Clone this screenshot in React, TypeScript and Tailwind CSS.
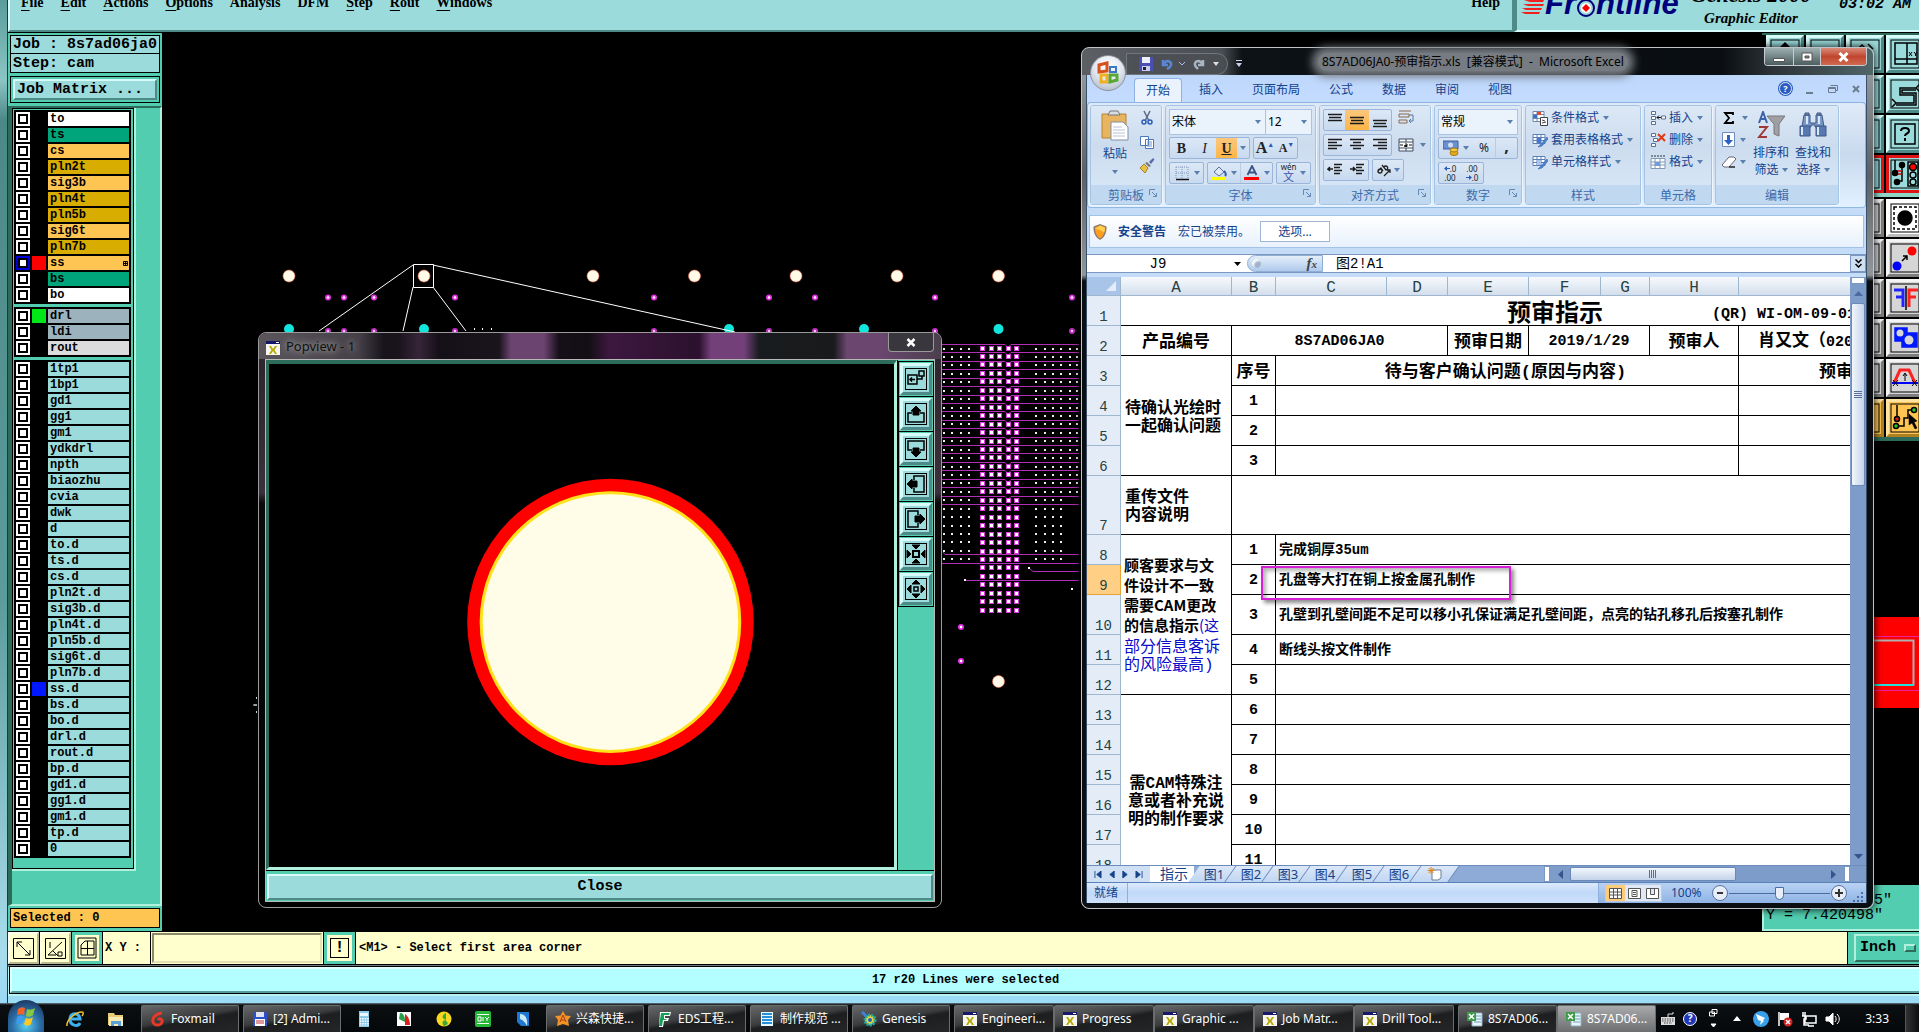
import React from "react";

const SERIF = "font-['Liberation_Serif',serif]";
const MONO = "font-['Liberation_Mono','Noto_Sans_CJK_SC',monospace]";
const UI = "font-['Noto_Sans','Noto_Sans_CJK_SC',sans-serif]";
const CJK = "font-['Noto_Sans_CJK_SC',sans-serif]";

const RAISED_CYAN =
  "border-2 border-t-[#d6fbf8] border-l-[#d6fbf8] border-b-[#4d8a88] border-r-[#4d8a88] bg-[#9bdbdb]";

/* ---------- Genesis: menu bar ---------- */

const menus: [string, string][] = [
  ["F", "ile"],
  ["E", "dit"],
  ["A", "ctions"],
  ["O", "ptions"],
  ["", "Analysis"],
  ["", "DFM"],
  ["S", "tep"],
  ["R", "out"],
  ["W", "indows"],
];

function MenuBar() {
  return (
    <header className="flex h-[33px] shrink-0 overflow-hidden border-b border-black bg-[#9bdbdb]">
      <nav
        className={`flex min-w-0 flex-1 items-start border-b-2 border-l-2 border-r-2 border-b-[#4d8a88] border-l-[#d6fbf8] border-r-[#4d8a88] pl-[11px] pr-3 text-[14px] font-bold leading-5 ${SERIF}`}
      >
        <div className="-mt-[7px] flex gap-[17px]">
          {menus.map(([key, rest]) => (
            <button key={key + rest} className="whitespace-nowrap">
              {key && <span className="underline underline-offset-[3px]">{key}</span>}
              {rest}
            </button>
          ))}
        </div>
        <button className="-mt-[7px] ml-auto">Help</button>
      </nav>
      <div className="flex w-[405px] shrink-0 items-start overflow-hidden border-b-2 border-l-[3px] border-b-[#d6fbf8] border-l-[#4d8a88]">
        <div className="-mt-[14px] flex w-[168px] items-start pl-1">
          <svg className="mt-[14px] h-4 w-6" viewBox="0 0 24 16" fill="#f21d1d">
            <path d="M3 0h20l-1 2H9zM2 4h21l-1 2H7zM1 8h20l-1 2H5zM0 12h19l-1 2H4z" />
          </svg>
          <div className="flex items-start font-['Liberation_Sans',sans-serif] text-[31px] font-bold italic leading-[36px] text-[#00007c]">
            Fr
            <svg className="mt-3 h-5 w-5" viewBox="0 0 20 20" role="img" aria-label="o">
              <circle cx="10" cy="10" r="8" fill="none" stroke="#00007c" strokeWidth="2" />
              <circle cx="10" cy="10" r="5" fill="#fff" />
              <path d="M10 6l4 4-4 4-4-4z" fill="#f00" />
            </svg>
            ntline
          </div>
        </div>
        <div className={`-mt-4 w-[132px] text-center font-bold italic ${SERIF}`}>
          <div className="whitespace-nowrap text-[22px] leading-[22px]">Genesis 2000</div>
          <div className="pt-1 text-[15px] leading-4">Graphic Editor</div>
        </div>
        <div className={`-mt-1 ml-auto pr-2 text-[15px] font-bold italic leading-[18px] ${MONO}`}>03:02 AM</div>
      </div>
    </header>
  );
}

/* ---------- Genesis: layer list ---------- */

type Layer = { name: string; tone: string; swatch?: string; active?: boolean };

const WHITE = "bg-white";
const GREEN = "bg-[#00a57b]";
const AMBER = "bg-[#ffc552]";
const OCHRE = "bg-[#d9ac00]";
const SLATE = "bg-[#9cb3bd]";
const SILVER = "bg-[#dcdcdc]";
const AQUA = "bg-[#9bdbdb]";

const boardLayers: Layer[] = [
  { name: "to", tone: WHITE },
  { name: "ts", tone: GREEN },
  { name: "cs", tone: AMBER },
  { name: "pln2t", tone: OCHRE },
  { name: "sig3b", tone: AMBER },
  { name: "pln4t", tone: OCHRE },
  { name: "pln5b", tone: OCHRE },
  { name: "sig6t", tone: AMBER },
  { name: "pln7b", tone: OCHRE },
  { name: "ss", tone: AMBER, swatch: "bg-[#ff0000]", active: true },
  { name: "bs", tone: GREEN },
  { name: "bo", tone: WHITE },
];
const drillLayers: Layer[] = [
  { name: "drl", tone: SLATE, swatch: "bg-[#00e818]" },
  { name: "ldi", tone: SLATE },
  { name: "rout", tone: SILVER },
];
const miscLayers: Layer[] =
  "1tp1 1bp1 gd1 gg1 gm1 ydkdrl npth biaozhu cvia dwk d to.d ts.d cs.d pln2t.d sig3b.d pln4t.d pln5b.d sig6t.d pln7b.d ss.d bs.d bo.d drl.d rout.d bp.d gd1.d gg1.d gm1.d tp.d 0"
    .split(" ")
    .map((name) => ({ name, tone: AQUA, swatch: name === "ss.d" ? "bg-[#0018ff]" : undefined }));

function LayerGroup({ layers }: { layers: Layer[] }) {
  return (
    <div className="flex flex-col gap-[2px] bg-black p-[2px]">
      {layers.map((l) => (
        <label key={l.name} className="flex h-[14px] gap-[2px]">
          <input
            type="checkbox"
            className={`h-[14px] w-[14px] shrink-0 appearance-none border-2 bg-white shadow-[inset_0_0_0_2px_#000] ${
              l.active ? "border-[#0000d8]" : "border-white"
            }`}
          />
          <span className={`w-[14px] shrink-0 ${l.swatch ?? "bg-black"}`} />
          <span className={`flex flex-1 items-center justify-between pl-[2px] text-[12px] font-bold leading-[14px] ${l.tone} ${MONO}`}>
            {l.name}
            {l.active && (
              <svg className="mr-px h-[5px] w-[5px]" viewBox="0 0 5 5" fill="none" stroke="#000">
                <path d="M.5.5h4v4h-4zM2.5 0v5M0 2.5h5" />
              </svg>
            )}
          </span>
        </label>
      ))}
    </div>
  );
}

function LayerPanel() {
  return (
    <aside className={`flex w-[154px] shrink-0 flex-col bg-[#52cdb0] ${MONO} font-bold`}>
      <div className="mx-[2px] mt-[2px] flex flex-col text-[15px]">
        <div className="h-[19px] whitespace-nowrap border border-black bg-[#9bdbdb] pl-[2px] leading-[17px]">Job : 8s7ad06ja0</div>
        <div className="h-[19px] border border-t-0 border-black bg-[#9bdbdb] pl-[2px] leading-[20px]">Step: cam</div>
        <div className="mt-[3px] h-[27px] border border-black bg-[#52cdb0] p-[2px]">
          <button className={`h-full w-full pl-[2px] text-left leading-[17px] ${RAISED_CYAN}`}>Job Matrix ...</button>
        </div>
      </div>
      <div className="mt-[3px] flex flex-1 items-start border-b-2 border-l-4 border-r-2 border-t-2 border-b-[#b0f0dc] border-l-[#2d6b5b] border-r-[#b0f0dc] border-t-[#2d6b5b]">
        <div className="w-[124px] border-b-2 border-r-2 border-[#b0f0dc]">
          <div className="flex flex-col gap-[3px] border border-black bg-[#52cdb0] pb-[10px] pl-px pr-[2px] pt-px">
            <LayerGroup layers={boardLayers} />
            <LayerGroup layers={drillLayers} />
            <LayerGroup layers={miscLayers} />
          </div>
        </div>
      </div>
      <div className="mx-[2px] mb-[3px] mt-[2px] h-5 border border-black bg-[#ffc552] pl-[2px] text-[12px] leading-[18px]">
        Selected : 0
      </div>
    </aside>
  );
}

/* ---------- Genesis: board canvas ---------- */

const range = (n: number) => Array.from({ length: n }, (_, i) => i);

function BoardCanvas() {
  const pads = [289, 424, 593, 694.5, 796, 897, 998.5];
  const vias = [328, 344, 374, 455, 654, 769, 815, 935, 1072];
  const cyan = [289, 424, 729, 864, 998.5];
  return (
    <div className="relative min-w-0 flex-1 overflow-hidden bg-black">
      <svg className="absolute left-0 top-0 h-[897px] w-[1600px]" viewBox="162 33 1600 897">
        {pads.map((x) => (
          <circle key={x} cx={x} cy="276" r="6" fill="#fffbe8" stroke="#ff6a50" strokeWidth=".6" />
        ))}
        <circle cx="998.5" cy="681.5" r="6" fill="#fffbe8" stroke="#ff6a50" strokeWidth=".6" />
        {vias.map((x) => (
          <g key={x}>
            <circle cx={x} cy="297.5" r="3" fill="#e22fe2" />
            <circle cx={x} cy="297.5" r="1.3" fill="#fff" />
            <circle cx={x} cy="331" r="3" fill="#c02cc0" />
            <circle cx={x} cy="331" r="1.2" fill="#f8c8f8" />
          </g>
        ))}
        {[627, 661].map((y) => (
          <g key={y}>
            <circle cx="961" cy={y} r="3" fill="#e22fe2" />
            <circle cx="961" cy={y} r="1.3" fill="#fff" />
          </g>
        ))}
        {cyan.map((x) => (
          <circle key={x} cx={x} cy="329" r="5" fill="#12e6dc" />
        ))}
        <path
          d="M413.5 264.5h20v23h-20zM413 265L319 331M413 287L403 331M433 287l33 44M433 265l302 67"
          fill="none"
          stroke="#fff"
        />
        <path d="M474 328h1v2h-1zM482 328h1v2h-1zM491 328h1v2h-1z" fill="#fff" />
        <path d="M253 705h4M256.500 697v2M256.500 711v2M254 705h3" stroke="#c8d0d8" />
        {range(20).map((i) => {
          const y = Math.round(344 + i * 8.42) + 0.5;
          return <path key={i} d={`M942 ${y}h63l3 3l3 -3h68`} fill="none" stroke="#b02fb4" />;
        })}
        {range(32).map((r) =>
          range(5).map((c) => {
            const x = Math.round(982 + c * 8.5);
            const y = Math.round(347.5 + r * 8.46);
            return (
              <g key={`${r}-${c}`}>
                <rect x={x - 2} y={y - 2} width="5" height="5" fill="#d838d8" />
                <rect x={x - 1} y={y - 1} width="3" height="3" fill="#fff" />
              </g>
            );
          })
        )}
        {range(26).map((r) =>
          [944, 952, 961, 969, 1036, 1045, 1053, 1061, 1070, 1077].map((x, c) =>
            c > 7 && r > 17 ? null : (
              <rect key={`${r}-${x}`} x={x - 1} y={Math.round(347.5 + r * 8.43)} width="2" height="2" fill="#e8f0e8" />
            )
          )
        )}
        <path
          d="M943 552l2 2.500h134M942 563.5h137M1029 568l4 3.500h46M965 580.500h114"
          fill="none"
          stroke="#b02fb4"
        />
        <path d="M964 579h2v2h-2zM1028 567h2v2h-2zM1071 588h2v2h-2z" fill="#fff" />
      </svg>
    </div>
  );
}

/* ---------- Genesis: tool palette at the right ---------- */

function Tool({ tone, children }: { tone: string; children?: React.ReactNode }) {
  return (
    <button className={`h-[38px] w-[38px] shrink-0 border-[3px] p-px ${tone}`}>
      <svg className="h-full w-full" viewBox="0 0 30 30" fill="none" stroke="#000" strokeWidth="1.5">
        <rect x="1" y="1" width="28" height="28" strokeWidth="1" />
        {children}
      </svg>
    </button>
  );
}

const T_CYAN = "bg-[#9bdbdb] border-t-[#d6fbf8] border-l-[#d6fbf8] border-b-[#4d8a88] border-r-[#4d8a88]";
const T_GRAY = "bg-[#d6d6d6] border-t-[#f4f4f4] border-l-[#f4f4f4] border-b-[#7d7d7d] border-r-[#7d7d7d]";
const T_RED = "bg-[#9bdbdb] border-[#e01414]";
const T_WHITE = "bg-white border-white border-b-[#bbb]";
const T_AMBER = "bg-[#ffc552] border-t-[#ffe3a0] border-l-[#ffe3a0] border-b-[#b08020] border-r-[#b08020]";

function ToolPalette() {
  const filler = (tone: string, n: number) => range(n).map((i) => <Tool key={i} tone={tone} />);
  const grid = "grid w-[164px] grid-cols-[repeat(4,38px)] gap-[2px] bg-black pl-[4px]";
  return (
    <aside className="flex w-[157px] shrink-0 flex-col overflow-hidden bg-black">
      <div className={`${grid} border-t-2 border-t-[#2d6b5b]`}>
        <Tool tone={T_CYAN}>
          <path d="M15 4l6 6H9zM15 10v14" fill="#000" />
        </Tool>
        <Tool tone={T_CYAN}>
          <path d="M6 10h18v12H6z" />
        </Tool>
        <Tool tone={T_CYAN}>
          <path d="M8 10l4-4 4 4M18 5l5 5" />
        </Tool>
        <Tool tone={T_CYAN}>
          <path d="M5 4h22v21H5zM17 4v21M5 20h22" />
          <path d="M19 13l3 4m0-4l-3 4M24 13l1.500 2 1.500-2m-1.500 2v2" strokeWidth="1" />
        </Tool>
        {filler(T_CYAN, 3)}
        <Tool tone={T_CYAN}>
          <path d="M26 9H10v7h14v8H6M30 5l-4 4 4 4M2 20l4 4-4 4" />
          <path d="M26 11H12v3h14v12H6" />
        </Tool>
        {filler(T_CYAN, 3)}
        <Tool tone={T_CYAN}>
          <path d="M5 5h20v20H5z" />
          <path d="M11 12c0-4 8-4 8 0 0 3-4 2-4 5M15 19v3" strokeWidth="2" />
        </Tool>
        {filler(T_RED, 3)}
        <Tool tone={T_RED}>
          <path d="M5 1v12M12 6v16H7M18 3h10v24H18z" />
          <path d="M6 12h6M6 15h5" stroke="#d00" />
          <circle cx="12" cy="6" r="2.500" fill="#000" />
          <circle cx="5" cy="14" r="2.500" fill="#000" />
          <circle cx="7" cy="23" r="2.500" fill="#000" />
          <circle cx="23" cy="8" r="3.500" fill="#f00" />
          <circle cx="23" cy="16" r="3" />
          <circle cx="23" cy="23" r="3" />
        </Tool>
      </div>
      <div className="h-1 shrink-0 bg-[#8fd8c8]" />
      <div className={`${grid} pt-[2px]`}>
        {filler(T_GRAY, 3)}
        <Tool tone={T_WHITE}>
          <rect x="4" y="4" width="22" height="22" strokeDasharray="3 2" />
          <circle cx="15" cy="15" r="7" fill="#000" />
        </Tool>
        {filler(T_GRAY, 3)}
        <Tool tone={T_GRAY}>
          <circle cx="7" cy="23" r="4.500" fill="#00f" stroke="none" />
          <circle cx="22" cy="8" r="4.500" fill="#f00" stroke="none" />
          <path d="M12 18l5-5m-4 0h4v4" />
        </Tool>
        {filler(T_GRAY, 3)}
        <Tool tone={T_GRAY}>
          <path d="M4 7h9v17M6 14h7" stroke="#22f" strokeWidth="3" />
          <path d="M28 7H19v17M26 14h-7" stroke="#f22" strokeWidth="3" />
          <path d="M16 3v24" />
        </Tool>
        {filler(T_GRAY, 3)}
        <Tool tone={T_GRAY}>
          <path d="M5 5h12v5h10v14H12v-6H5z" fill="#0018ff" stroke="#0018ff" />
          <circle cx="10" cy="10" r="3.500" fill="#d6d6d6" stroke="none" />
          <circle cx="19" cy="17" r="4.500" fill="#d6d6d6" stroke="none" />
        </Tool>
        {filler(T_GRAY, 3)}
        <Tool tone={T_GRAY}>
          <path d="M4 20L10 7h9l6 13" stroke="#f22" strokeWidth="3" />
          <path d="M2 20h26" stroke="#00f" strokeWidth="2" />
          <path d="M15 18v-7m-2 2l2-3 2 3M3 17l5 6m0-6l-5 6M22 17l5 6m0-6l-5 6" strokeWidth="1" />
        </Tool>
        {filler(T_AMBER, 3)}
        <Tool tone={T_AMBER}>
          <path d="M7 2v13M6 23h8v-8h4V7h5" />
          <circle cx="7" cy="16" r="2.500" fill="#c22" />
          <circle cx="6" cy="23" r="2.500" fill="#2c2" />
          <circle cx="24" cy="7" r="2.500" fill="#2c2" />
          <path d="M19 11l8 7-3 1 3 6-2 1-3-6-3 2z" fill="#000" strokeWidth=".5" />
        </Tool>
      </div>
      <div className="h-1 shrink-0 bg-[#2d6b5b]" />
      <div className="flex flex-1 items-start justify-end pt-[176px]">
        <svg className="h-[91px] w-[45px]" viewBox="0 0 45 91" fill="none">
          <path d="M0 0h45v91H0z" fill="#f00" />
          <path d="M0 19.500h45M0 73.500h45" stroke="#f02098" />
          <path d="M0 23.500h39.500v45" stroke="#b0b0b0" strokeWidth="2" />
          <path d="M0 68h40" stroke="#20e0d8" strokeWidth="2" />
        </svg>
      </div>
      <div
        className={`h-[46px] shrink-0 whitespace-pre border-b-2 border-l-2 border-[#b0f0dc] bg-[#52cdb0] pl-[2px] pt-2 text-[15px] leading-[15px] ${MONO}`}
      >
        <div>{'X = 9.1257385"'}</div>
        <div>{'Y = 7.420498"'}</div>
      </div>
    </aside>
  );
}

/* ---------- Genesis: command line and status ---------- */

function CommandBar() {
  const yellowBtn =
    "flex items-center justify-center border-2 border-t-[#fffff0] border-l-[#fffff0] border-b-[#b8b890] border-r-[#b8b890] bg-[#ffffce]";
  return (
    <div className="flex h-[34px] shrink-0 gap-px border-y border-black bg-black">
      <button className={`w-[31px] ${yellowBtn}`} aria-label="Distance">
        <svg className="h-[21px] w-[21px]" viewBox="0 0 21 21" fill="none" stroke="#000">
          <path d="M.5.5h20v20H.5zM4 4l13 13M4 9V4h5M17 12v5h-5" />
        </svg>
      </button>
      <button className={`w-[31px] ${yellowBtn}`} aria-label="Angle">
        <svg className="h-[21px] w-[21px]" viewBox="0 0 21 21" fill="none" stroke="#000">
          <path d="M.5.5h20v20H.5zM3 17L17 4M3 17h8M5 4v6M8 13l5 5M13 14h4v4h-4z" />
        </svg>
      </button>
      <button className="w-[30px] border-[3px] border-[#52cdb0] bg-[#ffffce] p-[2px]" aria-label="Snap grid">
        <svg className="h-full w-full" viewBox="0 0 20 22" fill="none" stroke="#000">
          <path d="M1 1h18v20H1zM4 8l4-4h9v14H4zM10.500 4v14M4 11.500h13" />
        </svg>
      </button>
      <label htmlFor="xy" className={`flex w-[47px] items-center bg-[#ffffce] pl-[2px] text-[12px] font-bold ${MONO}`}>
        X Y :
      </label>
      <div className="w-[172px] bg-[#ffffce] p-px">
        <input
          id="xy"
          defaultValue=""
          className="h-full w-full border-2 border-b-[#e2e2b4] border-l-[#8a8a6a] border-r-[#e2e2b4] border-t-[#8a8a6a] bg-[#ffffce] px-1"
        />
      </div>
      <button
        className={`w-[31px] border-[3px] border-[#52cdb0] bg-[#ffffce] p-[3px] text-[16px] font-bold leading-none ${MONO}`}
      >
        <span className="flex h-full items-center justify-center border border-black">!</span>
      </button>
      <output className={`flex flex-1 items-center bg-[#ffffce] pl-[3px] text-[12px] font-bold ${MONO}`}>
        &lt;M1&gt; - Select first area corner
      </output>
      <div className="w-[71px] bg-[#52cdb0] py-[2px] pl-[6px]">
        <button
          className={`flex h-full w-full items-center gap-2 border-2 border-r-0 border-b-[#2d6b5b] border-l-[#b0f0dc] border-t-[#b0f0dc] pl-1 text-[15px] font-bold ${MONO}`}
        >
          Inch
          <span className="h-2 w-3 border-2 border-b-[#2d6b5b] border-l-[#b0f0dc] border-r-[#2d6b5b] border-t-[#b0f0dc]" />
        </button>
      </div>
    </div>
  );
}

/* ---------- Popview window ---------- */

function XIcon() {
  return (
    <svg className="h-[14px] w-[14px] shrink-0" viewBox="0 0 14 14">
      <path d="M0 0h14v14H0z" fill="#f6f6ee" />
      <path d="M0 0h14v3H0z" fill="#18186a" />
      <path d="M10 1h3v1h-3z" fill="#fff" />
      <path d="M3 5h2l2 3 2-3h2L8.500 9l2.500 4H9L7 10l-2 3H3l2.500-4z" fill="#b5a800" />
    </svg>
  );
}

function PopTool({ label, children }: { label: string; children: React.ReactNode }) {
  return (
    <button aria-label={label} className="h-[34px] w-[34px] border border-[#52cdb0] bg-[#52cdb0]">
      <span className="flex h-full w-full items-center justify-center border-[3px] border-b-[#4d8a88] border-l-[#d6fbf8] border-r-[#4d8a88] border-t-[#d6fbf8] bg-[#9bdbdb]">
        <svg className="h-[22px] w-[22px]" viewBox="0 0 22 22" fill="none" stroke="#000">
          <rect x=".5" y=".5" width="21" height="21" />
          {children}
        </svg>
      </span>
    </button>
  );
}

function Popview() {
  return (
    <section
      className={`absolute left-[258px] top-[332px] flex h-[576px] w-[684px] flex-col rounded-lg border border-[#9a9a9a] bg-[linear-gradient(180deg,#2b232d_0,#3b303d_160px,#0a0a0a_170px,#000_100%)] pb-[5px] pl-[6px] pr-[6px] ${UI}`}
    >
      <div className="-mx-[6px] flex h-[26px] shrink-0 items-start rounded-t-lg bg-[linear-gradient(90deg,#5a565c_0,#454047_100px,#17131a_125px,#1a141d_140px,#37243a_160px,#151018_180px,#1a141d_240px,#6b4470_252px,#6b4470_285px,#160f18_300px,#120f14_330px,#3d173f_350px,#2b112d_440px,#74407a_452px,#74407a_485px,#181c1e_500px,#1a1a1c_575px,#6b4770_588px,#6b4770_620px,#4b404e_680px)] pl-[7px] pr-[7px]">
        <span className="mt-[8px]">
          <XIcon />
        </span>
        <h2 className="ml-[6px] mt-[4px] text-[13px] leading-[18px] text-[#111] [text-shadow:0_0_6px_#aaa,0_0_10px_#999]">
          Popview - 1
        </h2>
        <button
          aria-label="Close Popview"
          className="ml-auto flex h-[19px] w-[46px] items-center justify-center rounded-b border border-t-0 border-[#9a9a9a] bg-[#3a363d] text-white"
        >
          <svg className="h-[9px] w-[10px]" viewBox="0 0 10 9" stroke="#fff" strokeWidth="2.500">
            <path d="M1.500 1l7 7M8.500 1l-7 7" />
          </svg>
        </button>
      </div>
      <div className="flex min-h-0 flex-1 flex-col border border-[#b8b8b8] bg-[#52cdb0]">
        <div className="flex min-h-0 flex-1">
          <div className="min-w-0 flex-1 overflow-hidden border-b-[3px] border-l-[3px] border-r-[3px] border-t-4 border-b-[#b0f0dc] border-l-[#2d6b5b] border-r-[#b0f0dc] border-t-[#2d6b5b] bg-black">
            <svg className="h-full w-full" viewBox="0 0 626 504" preserveAspectRatio="xMinYMin slice">
              <circle cx="342" cy="258.500" r="143.500" fill="#f00" />
              <circle cx="342" cy="258.500" r="131" fill="#ffe21a" />
              <circle cx="342" cy="258.500" r="128" fill="#fffce8" />
            </svg>
          </div>
          <div className="flex w-[37px] flex-col items-center gap-px border-l border-black pt-[2px] [&>button]:shadow-[0_0_0_1px_#000]">
            <PopTool label="Zoom to source">
              <path d="M3 7h9v9H3zM14 3h5v5h-5zM12 11h5V8M10 11.500H5m2-2l-2 2 2 2" strokeWidth="1.500" />
            </PopTool>
            <PopTool label="Pan up">
              <path d="M7 10H3v9h16v-9h-4" strokeWidth="1.500" />
              <path d="M11 3l5 5h-2v4H8V8H6z" fill="#000" />
            </PopTool>
            <PopTool label="Pan down">
              <path d="M7 12H3V3h16v9h-4" strokeWidth="1.500" />
              <path d="M11 19l5-5h-2v-4H8v4H6z" fill="#000" />
            </PopTool>
            <PopTool label="Pan left">
              <path d="M9 7V3h10v16H9v-4" strokeWidth="1.500" />
              <path d="M2 11l5-5v2h5v6H7v2z" fill="#000" />
            </PopTool>
            <PopTool label="Pan right">
              <path d="M13 7V3H3v16h10v-4" strokeWidth="1.500" />
              <path d="M20 11l-5-5v2h-5v6h5v2z" fill="#000" />
            </PopTool>
            <PopTool label="Zoom out">
              <path d="M8 8h6v6H8z" strokeWidth="2" />
              <path d="M7 2h8l-4 4zM7 20h8l-4-4zM2 7v8l4-4zM20 7v8l-4-4z" fill="#000" />
            </PopTool>
            <PopTool label="Zoom in">
              <path d="M9 9h4v4H9z" strokeWidth="1.500" />
              <path d="M7 6h8l-4-4zM7 16h8l-4 4zM6 7v8l-4-4zM16 7v8l4-4z" fill="#000" />
            </PopTool>
          </div>
        </div>
        <div className="border-t border-black px-px pb-px pt-px">
          <button className={`h-[26px] w-full text-[15px] font-bold leading-[22px] ${RAISED_CYAN} ${MONO}`}>Close</button>
        </div>
      </div>
    </section>
  );
}

/* ---------- Excel window ---------- */

const Caret = ({ className = "" }: { className?: string }) => (
  <svg className={`h-1 w-[6px] shrink-0 ${className}`} viewBox="0 0 6 4">
    <path d="M0 0h6L3 4z" fill="#5b7fae" />
  </svg>
);

function Dropdown({ label, value, className }: { label: string; value: string; className: string }) {
  return (
    <div className={`relative flex h-[26px] items-center border border-[#a9c3e4] bg-[#eaf2fb] ${className}`}>
      <select aria-label={label} className="h-full w-full appearance-none bg-transparent pl-[2px] text-black">
        <option>{value}</option>
      </select>
      <Caret className="pointer-events-none absolute right-1" />
    </div>
  );
}

function ExcelTitle() {
  return (
    <div className="relative flex h-[27px] shrink-0 items-start">
      <div className="ml-[44px] mt-[5px] flex h-[22px] w-[102px] items-center rounded-r-xl border border-[#70767c] bg-[#4a4f54]/70 pl-[12px]">
        <svg className="h-[14px] w-[14px]" viewBox="0 0 14 14">
          <path d="M0 0h14v14H0z" fill="#4a4fb0" />
          <path d="M3 0h8v6H3z" fill="#eef" />
          <path d="M3 9h8v5H3z" fill="#c8ccf0" />
          <path d="M4 10h3v3H4z" fill="#223" />
        </svg>
        <svg className="ml-2 h-3 w-3" viewBox="0 0 12 12" fill="none" stroke="#5a86d8" strokeWidth="2.500">
          <path d="M2 2v5h5M2.500 6.500C5 1 11 3 10 7c-.5 2-2 3-4 4" />
        </svg>
        <svg className="ml-[6px] h-1 w-[6px]" viewBox="0 0 6 4" fill="none" stroke="#a8c0ea">
          <path d="M0 0l3 3 3-3" />
        </svg>
        <svg className="ml-2 h-3 w-3" viewBox="0 0 12 12" fill="none" stroke="#a8b4c0" strokeWidth="2.500">
          <path d="M10 2v5H5M9.500 6.500C7 1 1 3 2 7c.5 2 2 3 3 4" />
        </svg>
        <svg className="ml-2 h-1 w-[6px]" viewBox="0 0 6 4" fill="#ddd">
          <path d="M0 0h6L3 4z" />
        </svg>
      </div>
      <svg className="ml-2 mt-3 h-[7px] w-[6px]" viewBox="0 0 6 7" fill="#c8d4ea">
        <path d="M0 0h6v1H0zM0 3h6L3 7z" />
      </svg>
      <h1 className="ml-[76px] mt-[5px] whitespace-pre rounded-full bg-[#777c82] px-[4px] text-[12px] leading-[18px] text-black shadow-[0_0_8px_6px_#777c82]">
        {"8S7AD06JA0-预审指示.xls  [兼容模式]  -  Microsoft Excel"}
      </h1>
      <div className="ml-auto mr-[6px] flex h-[18px] overflow-hidden rounded-b border border-t-0 border-[#c8ccd0]">
        <button aria-label="Minimize" className="w-7 bg-gradient-to-b from-[#9fb0b2] to-[#4c5e60] pl-2 pt-[6px]">
          <svg className="h-1 w-3" viewBox="0 0 12 4">
            <path d="M.5.5h11v3H.5z" fill="#fff" stroke="#555" />
          </svg>
        </button>
        <button aria-label="Restore" className="w-[27px] border-l border-[#c8ccd0] bg-gradient-to-b from-[#9fb0b2] to-[#4c5e60] pl-[7px]">
          <svg className="h-[10px] w-3" viewBox="0 0 12 10">
            <path d="M1 1h10v8H1zM4 4h4v2H4z" fill="#fff" stroke="#555" fillRule="evenodd" />
          </svg>
        </button>
        <button
          aria-label="Close"
          className="flex w-[46px] items-center justify-center border-l border-[#c8ccd0] bg-gradient-to-b from-[#d98a7a] via-[#c0452d] to-[#d06a50]"
        >
          <svg className="h-[10px] w-[11px]" viewBox="0 0 11 10" stroke="#fff" strokeWidth="3">
            <path d="M1.500 1l8 8M9.500 1l-8 8" />
          </svg>
        </button>
      </div>
      <button aria-label="Office" className="absolute left-[8px] top-[7px] h-9 w-9 rounded-full border border-[#8a9098] bg-[radial-gradient(circle_at_50%_30%,#fff_0,#e4e8f0_45%,#a4afc0_100%)]">
        <svg className="mx-auto h-6 w-6" viewBox="0 0 24 24" fill="none" strokeWidth="3">
          <path d="M3 4l8-2v8l-8 1z" stroke="#d8501c" />
          <path d="M14 6h6v5h-6z" stroke="#3c78c8" strokeWidth="2" />
          <path d="M5 14h6v7H5z" stroke="#f2b020" />
          <path d="M14 14h7v5l-7 2z" stroke="#58a838" />
        </svg>
      </button>
    </div>
  );
}

function RibbonTabs() {
  return (
    <div className="flex h-[27px] shrink-0 items-end bg-gradient-to-b from-[#bdd7fb] to-[#c4dcff] pl-[47px] pr-[6px] text-[12px] text-[#15428b]">
      <button className="-mb-px h-[25px] rounded-t border border-b-0 border-[#8db2e3] bg-[#eaf3fd] px-[11px]">开始</button>
      <div className="ml-[17px] flex h-6 items-center gap-[29px]">
        {["插入", "页面布局", "公式", "数据", "审阅", "视图"].map((t) => (
          <button key={t}>{t}</button>
        ))}
      </div>
      <div className="ml-auto flex h-[27px] items-center gap-[14px]">
        <span className="flex h-[13px] w-[13px] items-center justify-center rounded-full border border-[#dce8fa] bg-[#2c5cc0] text-[9px] font-bold text-white shadow-[0_0_0_1px_#2c5cc0]">?</span>
        <svg className="h-3 w-2" viewBox="0 0 8 12">
          <path d="M0 9h7v2H0z" fill="#6c7c90" />
        </svg>
        <svg className="h-[10px] w-[10px]" viewBox="0 0 10 10" fill="none" stroke="#6c7c90">
          <path d="M2.500 1.500h7v5h-2M.5 3.500h7v5h-7zM.5 4.500h7" />
        </svg>
        <svg className="h-2 w-2" viewBox="0 0 8 8" stroke="#6c7c90" strokeWidth="2">
          <path d="M1 1l6 6M7 1L1 7" />
        </svg>
      </div>
    </div>
  );
}

function Group({ title, width, launcher, children }: { title: string; width: string; launcher?: boolean; children: React.ReactNode }) {
  return (
    <section className={`flex shrink-0 flex-col overflow-hidden rounded-[3px] border border-[#a5c3e2] shadow-[1px_1px_0_#eef5fd] ${width}`}>
      <div className="flex min-h-0 flex-1 bg-gradient-to-b from-[#dce8f6] via-[#ccdcee] to-[#d6e5f6]">{children}</div>
      <div className="relative h-[19px] bg-[#c0d8f0] text-center text-[12px] leading-[21px] text-[#3e6aaa]">
        {title}
        {launcher && (
          <svg className="absolute right-1 top-1 h-2 w-2" viewBox="0 0 8 8" fill="none" stroke="#6688b4">
            <path d="M.5 6V.5H6M3 3l4 4M7.500 4v3.500H4" />
          </svg>
        )}
      </div>
    </section>
  );
}

const Bar = ({ className = "", children }: { className?: string; children: React.ReactNode }) => (
  <div className={`flex h-[22px] items-stretch overflow-hidden rounded-[2px] border border-[#9ab5d8] bg-gradient-to-b from-[#dce8f6] to-[#c8daf0] [&>button]:flex [&>button]:items-center [&>button]:justify-center ${className}`}>
    {children}
  </div>
);
const ON = "bg-gradient-to-b from-[#fcc77c] to-[#fdb544]";

const Lines = ({ d }: { d: string }) => (
  <svg className="h-4 w-4" viewBox="0 0 16 16" stroke="#1c1c1c" fill="none" strokeWidth="1.500">
    <path d={d} />
  </svg>
);

const SmallIcon = ({ children }: { children: React.ReactNode }) => (
  <svg className="h-4 w-4 shrink-0" viewBox="0 0 16 16" fill="none">
    {children}
  </svg>
);

function Sheetlet({ accent }: { accent: string }) {
  return (
    <SmallIcon>
      <path d="M1 2.500h12v9H1zM1 5.500h12M1 8.500h12M5 2.500v9M9 2.500v9" stroke="#5a7fb8" fill="#fff" />
      <path d="M5 6h4v5H5z" fill={accent} />
      <path d="M15 5l-6 7-3 3 4-1 6-7z" fill="#4a86d0" stroke="#2c5a9c" strokeWidth=".5" />
    </SmallIcon>
  );
}

function Ribbon() {
  return (
    <div className="flex h-[106px] shrink-0 gap-[3px] rounded-[4px] border border-[#8db2e3] border-b-[#90b8e0] bg-gradient-to-b from-[#dfeaf8] via-[#c9daee] to-[#e2f1ff] pb-[2px] pl-[2px] pt-[2px] text-[12px] text-[#15428b]">
      <Group title="剪贴板" width="w-[72px]" launcher>
        <button className="ml-[10px] mt-1 flex w-7 flex-col items-center">
          <svg className="h-[31px] w-7" viewBox="0 0 28 31">
            <path d="M1 4h24v24H1z" fill="#e8b460" stroke="#b88430" />
            <path d="M7 5h12l-2-4h-8z" fill="#d8dce0" stroke="#777" />
            <path d="M10 12h12l5 5v13H10z" fill="#fff" stroke="#8090a8" />
            <path d="M12 17h9M12 20h12M12 23h12M12 26h12" stroke="#b8c4d8" />
          </svg>
          <span className="mt-[5px] whitespace-nowrap leading-4">粘贴</span>
          <Caret className="mt-2" />
        </button>
        <div className="ml-[10px] mt-1 flex flex-col gap-2">
          <SmallIcon>
            <path d="M5 1l5 10M11 1L6 11" stroke="#5a6a80" strokeWidth="1.500" />
            <path d="M3 12a2 2 0 104 0 2 2 0 10-4 0M9 12a2 2 0 104 0 2 2 0 10-4 0" stroke="#2c5cb8" strokeWidth="1.500" />
          </SmallIcon>
          <SmallIcon>
            <path d="M1.500 2.500h8v9h-8zM6.500 5.500h8v9h-8z" fill="#fff" stroke="#4a78b8" />
            <path d="M8 8h5M8 10h5M8 12h5" stroke="#6c94cc" />
          </SmallIcon>
          <SmallIcon>
            <path d="M10 4l4-4 1.500 1.500L12 6z" fill="#5a6ab0" />
            <path d="M8 4l4 4-2 1-4-4z" fill="#777" />
            <path d="M5 6l4 4-3 5-5-5z" fill="#e8c048" stroke="#a88420" />
          </SmallIcon>
        </div>
      </Group>

      <Group title="字体" width="w-[151px]" launcher>
        <div className="ml-[3px] mt-[3px] flex flex-col gap-[2px]">
          <div className="flex">
            <Dropdown label="字体" value="宋体" className="w-[97px]" />
            <Dropdown label="字号" value="12" className="w-[46px] border-l-0" />
          </div>
          <div className={`flex gap-[3px] text-[#222] ${SERIF}`}>
            <Bar>
              <button className="w-[23px] text-[14px] font-bold">B</button>
              <button className="w-[23px] text-[14px] italic">I</button>
              <button className={`w-[21px] text-[14px] font-bold underline ${ON}`}>U</button>
              <button className="w-[12px]" aria-label="下划线样式">
                <Caret />
              </button>
            </Bar>
            <Bar>
              <button className="w-[22px] text-[16px] font-bold">
                A<sup className="text-[7px] text-[#2c5cb8]">▲</sup>
              </button>
              <button className="w-[21px] text-[12px] font-bold">
                A<sup className="text-[7px] text-[#2c5cb8]">▼</sup>
              </button>
            </Bar>
          </div>
          <div className="flex gap-[3px] pt-px">
            <Bar>
              <button className="w-[33px] gap-1" aria-label="边框">
                <SmallIcon>
                  <path d="M2 2h12M2 8h12M2 2v12M8 2v12M14 2v12" stroke="#7c94b4" strokeDasharray="1 1" />
                  <path d="M2 14.500h13" stroke="#111" strokeWidth="1.500" />
                </SmallIcon>
                <Caret />
              </button>
            </Bar>
            <Bar>
              <button className="w-[33px] gap-1 border-r border-[#b8cce4]" aria-label="填充颜色">
                <SmallIcon>
                  <path d="M3 7l5-5 5 5-5 4z" fill="#dfe8f4" stroke="#54719c" />
                  <path d="M13 6c2 2 2 4 1 5" stroke="#2c5cb8" strokeWidth="2" />
                  <path d="M0 12h15v3H0z" fill="#ff0" />
                </SmallIcon>
                <Caret />
              </button>
              <button className="w-[31px] gap-1" aria-label="字体颜色">
                <SmallIcon>
                  <path d="M3.500 10L8 1l4.500 9M5 7.500h6" stroke="#3a5488" strokeWidth="1.800" />
                  <path d="M0 12h15v3H0z" fill="#f00" />
                </SmallIcon>
                <Caret />
              </button>
            </Bar>
            <Bar>
              <button className="w-[33px] gap-1">
                <span className="flex flex-col items-center">
                  <span className="text-[8px] leading-[8px] text-[#222]">wén</span>
                  <span className="text-[11px] leading-[12px] text-[#3a50b0]">文</span>
                </span>
                <Caret />
              </button>
            </Bar>
          </div>
        </div>
      </Group>

      <Group title="对齐方式" width="w-[112px]" launcher>
        <div className="ml-[3px] mt-[3px] flex flex-col gap-[3px]">
          <div className="flex gap-[6px]">
            <Bar>
              <button className="w-[21px]" aria-label="顶端对齐">
                <Lines d="M1 2.500h14M2 5.500h12M1 8.500h14" />
              </button>
              <button className={`w-[24px] ${ON}`} aria-label="垂直居中">
                <Lines d="M1 5.500h14M2 8.500h12M1 11.500h14" />
              </button>
              <button className="w-[22px]" aria-label="底端对齐">
                <Lines d="M1 8.500h14M2 11.500h12M1 14.500h14" />
              </button>
            </Bar>
            <SmallIcon>
              <path d="M1 2h12M1 5h10v3H1zM1 11h8v3H1z" stroke="#8a6a50" />
              <path d="M11 6h4v6h-4m2-2l-2 2 2 2" stroke="#5574a0" />
            </SmallIcon>
          </div>
          <div className="flex items-center gap-[6px]">
            <Bar>
              <button className="w-[21px]" aria-label="左对齐">
                <Lines d="M1 2.500h14M1 5.500h9M1 8.500h14M1 11.500h9" />
              </button>
              <button className="w-[24px]" aria-label="居中">
                <Lines d="M1 2.500h14M4 5.500h8M1 8.500h14M4 11.500h8" />
              </button>
              <button className="w-[22px]" aria-label="右对齐">
                <Lines d="M1 2.500h14M6 5.500h9M1 8.500h14M6 11.500h9" />
              </button>
            </Bar>
            <SmallIcon>
              <path d="M1 2h14v12H1zM1 5h14M1 11h14M8 2v3M8 11v3" stroke="#3c4c64" fill="#fff" />
              <path d="M2 8h3M14 8h-3M7 7h2v2.500H6.500v-1H9" stroke="#111" />
            </SmallIcon>
            <Caret />
          </div>
          <div className="flex gap-[3px]">
            <Bar>
              <button className="w-[22px]" aria-label="减少缩进">
                <Lines d="M7 2.500h8M7 5.500h6M7 8.500h8M7 11.500h6M6 7H1l2-2M1 7l2 2" />
              </button>
              <button className="w-[22px]" aria-label="增加缩进">
                <Lines d="M7 2.500h8M7 5.500h6M7 8.500h8M7 11.500h6M1 7h5L4 5M6 7L4 9" />
              </button>
            </Bar>
            <Bar>
              <button className="w-[30px] gap-[2px]" aria-label="方向">
                <SmallIcon>
                  <path d="M2 9a2 2 0 104 0 2 2 0 10-4 0l3-3 2 3M6 3l4 5a2 2 0 10-2-3M8 14l6-6m-3 0h3v3" stroke="#222" strokeWidth="1.300" />
                </SmallIcon>
                <Caret />
              </button>
            </Bar>
          </div>
        </div>
      </Group>

      <Group title="数字" width="w-[88px]" launcher>
        <div className="ml-[3px] mt-[3px] flex flex-col gap-[2px]">
          <Dropdown label="数字格式" value="常规" className="w-20" />
          <Bar className="text-[#222]">
            <button className="w-[34px] gap-1" aria-label="会计数字格式">
              <SmallIcon>
                <path d="M0 1h15v8H0z" fill="#6a90d0" stroke="#3c60a0" />
                <circle cx="7.500" cy="5" r="2.500" fill="#cfdcf4" />
                <ellipse cx="11" cy="13" rx="4" ry="2.500" fill="#e8b020" stroke="#a87810" />
                <ellipse cx="11" cy="10" rx="4" ry="2" fill="#f4c840" stroke="#a87810" />
              </SmallIcon>
              <Caret />
            </button>
            <button className="w-[22px] text-[12px]">%</button>
            <button className="w-[22px] border-l border-[#b8cce4] pb-1 text-[16px] font-bold">,</button>
          </Bar>
          <Bar className="mt-px w-[46px] text-[8px] leading-[9px] text-[#222]">
            <button className="w-[22px] flex-col">
              <span className="flex items-center">
                <svg className="h-[5px] w-[6px]" viewBox="0 0 6 5" fill="#2c5cb8">
                  <path d="M3 0v2h3v1H3v2L0 2.500z" />
                </svg>
                .0
              </span>
              <span>.00</span>
            </button>
            <button className="w-[22px] flex-col">
              <span>.00</span>
              <span className="flex items-center">
                <svg className="h-[5px] w-[6px]" viewBox="0 0 6 5" fill="#2c5cb8">
                  <path d="M3 0v2H0v1h3v2l3-2.500z" />
                </svg>
                .0
              </span>
            </button>
          </Bar>
        </div>
      </Group>

      <Group title="样式" width="w-[116px]">
        <div className="ml-[6px] mt-1 flex flex-col gap-[6px] whitespace-nowrap leading-4">
          <button className="flex items-center gap-[3px]">
            <SmallIcon>
              <path d="M1 1.500h11v10H1zM1 4.500h11M1 8.500h11M5 1v11" stroke="#7088a8" fill="#fff" />
              <path d="M5 2h4v3H5z" fill="#e04a30" />
              <path d="M1 5h4v3H1z" fill="#3a70c8" />
              <path d="M8.500 7.500h7v8h-7zM10 10l3 1M10 13l4-1" stroke="#444" fill="#fff" />
            </SmallIcon>
            条件格式 <Caret className="ml-px" />
          </button>
          <button className="flex items-center gap-[3px]">
            <Sheetlet accent="#4a78c8" />
            套用表格格式 <Caret className="ml-px" />
          </button>
          <button className="flex items-center gap-[3px]">
            <Sheetlet accent="#a8c4ec" />
            单元格样式 <Caret className="ml-px" />
          </button>
        </div>
      </Group>

      <Group title="单元格" width="w-[68px]">
        <div className="ml-[5px] mt-1 flex flex-col gap-[6px] whitespace-nowrap leading-4">
          <button className="flex items-center gap-[3px]">
            <SmallIcon>
              <path d="M1.500 1.500h4v3h-4zM1.500 6.500h4v3h-4zM1.500 11.500h4v3h-4zM11.500 6h4v3h-4z" stroke="#56709c" fill="#fff" />
              <path d="M11 7.500H7m2-2l-2 2 2 2" stroke="#111" />
            </SmallIcon>
            插入 <Caret className="ml-px" />
          </button>
          <button className="flex items-center gap-[3px]">
            <SmallIcon>
              <path d="M1.500 1.500h4v3h-4zM3.500 6.500h4v3h-4zM1.500 11.500h4v3h-4z" stroke="#56709c" fill="#fff" />
              <path d="M8 2l7 7M15 2L8 9" stroke="#e03818" strokeWidth="2" />
            </SmallIcon>
            删除 <Caret className="ml-px" />
          </button>
          <button className="flex items-center gap-[3px]">
            <SmallIcon>
              <path d="M1 4.500h14v10H1zM1 8h14M1 11h14M5 4v10M10 4v10" stroke="#8098b8" fill="#fff" />
              <path d="M5 8h5v4H5z" fill="#6f9ce0" />
              <path d="M2 1v2M5 1v2M8 1v2M11 1v2M14 1v2" stroke="#333" />
            </SmallIcon>
            格式 <Caret className="ml-px" />
          </button>
        </div>
      </Group>

      <Group title="编辑" width="w-[124px]">
        <div className="ml-[5px] mt-1 flex w-[26px] flex-col gap-[6px]">
          <button className="flex items-center gap-[5px]" aria-label="求和">
            <SmallIcon>
              <path d="M12 5V3H4l4 5-4 5h8v-2" stroke="#000" strokeWidth="1.800" />
            </SmallIcon>
            <Caret />
          </button>
          <button className="flex items-center gap-[3px]" aria-label="填充">
            <SmallIcon>
              <path d="M1.500.5h12v14h-12z" fill="#fff" stroke="#6c8cc0" />
              <path d="M6 3h3v5h3l-4.500 5L3 8h3z" fill="#2c62c8" />
            </SmallIcon>
            <Caret />
          </button>
          <button className="flex items-center gap-[3px]" aria-label="清除">
            <SmallIcon>
              <path d="M1 11l7-8h5l2 2-7 8H3z" fill="#fff" stroke="#667" />
              <path d="M8 13h6" stroke="#222" strokeWidth="1.500" />
            </SmallIcon>
            <Caret />
          </button>
        </div>
        <button className="ml-1 mt-[5px] flex w-10 flex-col items-center whitespace-nowrap leading-[17px]">
          <svg className="mb-[5px] h-7 w-7" viewBox="0 0 28 28" fill="none">
            <path d="M2 12L6 1l4 11M3 8h6" stroke="#3c62a8" strokeWidth="2" />
            <path d="M2 16h8L2 26h8" stroke="#a03838" strokeWidth="2" />
            <path d="M10 5h18l-6 8v12l-5-2V13z" fill="#a0a0a4" stroke="#77777c" />
          </svg>
          <span>排序和</span>
          <span className="flex items-center gap-[3px]">
            筛选 <Caret />
          </span>
        </button>
        <button className="ml-[2px] mt-[5px] flex w-10 flex-col items-center whitespace-nowrap leading-[17px]">
          <svg className="mb-[5px] h-7 w-7" viewBox="0 0 28 28" stroke="#3c5888">
            <path d="M5 4h6v8h6V4h6l2 12h-9v-2h-4v2H3z" fill="#7898c8" />
            <path d="M1 15h10v10H1zM17 15h10v10H17z" fill="#5878b0" />
            <path d="M3 16v8M19 16v8M8 5v8M20 5v8" stroke="#dce8fa" strokeWidth="2" />
            <path d="M6 2h4v2H6zM18 2h4v2h-4z" fill="#889" />
          </svg>
          <span>查找和</span>
          <span className="flex items-center gap-[3px]">
            选择 <Caret />
          </span>
        </button>
      </Group>
    </div>
  );
}

function SecurityBar() {
  return (
    <div className="mx-[2px] mt-[7px] flex h-[33px] shrink-0 items-center border border-[#a3c2e8] bg-gradient-to-b from-white to-[#e8f1fc] pl-[3px] text-[12px] text-[#15428b]">
      <svg className="h-4 w-[14px]" viewBox="0 0 14 16">
        <path d="M7 0l6.500 2.500C14 9 11 14 7 16 3 14 0 9 .5 2.500z" fill="#8c7c70" />
        <path d="M7 1.500l5 2C12 9 10 12.500 7 14.500 4 12.500 2 9 2 3.500z" fill="#ff9d1c" />
        <path d="M7 1.500l5 2C12 6 11.500 7.500 11 8.500 8 6 5 5 2 5z" fill="#ffd04c" />
      </svg>
      <strong className="ml-[11px]">安全警告</strong>
      <span className="ml-3 w-[82px] whitespace-nowrap">宏已被禁用。</span>
      <button className="h-[21px] w-[70px] border border-[#9fb6d4] bg-white leading-[17px]">选项...</button>
    </div>
  );
}

function FormulaBar() {
  return (
    <div className={`mt-[6px] flex h-[19px] shrink-0 border-y border-[#7a98c0] bg-white text-[14px] leading-[17px] ${MONO}`}>
      <div className="flex w-[160px] items-center bg-white pl-[51px]">
        <input aria-label="名称框" defaultValue="J9" className="h-[17px] w-10 bg-transparent pt-[2px] text-center" />
        <svg className="ml-auto mr-[6px] h-1 w-[7px]" viewBox="0 0 7 4">
          <path d="M0 0h7L3.500 4z" />
        </svg>
      </div>
      <div className="flex w-[76px] items-center justify-between rounded-l-full border border-[#90aed4] bg-gradient-to-b from-[#e4eefa] to-[#b0caec] pl-1 pr-[5px]">
        <span className="h-[9px] w-[9px] rounded-full bg-[#9fb4cc] shadow-[inset_2px_2px_2px_#fff]" />
        <em className={`text-[15px] font-bold text-[#444] ${SERIF}`}>
          f<span className="text-[11px]">x</span>
        </em>
      </div>
      <input aria-label="编辑栏" defaultValue="图2!A1" className="min-w-0 flex-1 bg-white pl-[13px] pt-[2px]" />
      <button className="flex w-4 items-center justify-center border border-[#7a98c0] bg-[#cfe0f5]" aria-label="展开编辑栏">
        <svg className="h-[9px] w-[7px]" viewBox="0 0 7 9" fill="none" stroke="#000" strokeWidth="1.500">
          <path d="M.5.500l3 3 3-3M.5 5l3 3 3-3" />
        </svg>
      </button>
    </div>
  );
}

const rowHead = "border-b border-r border-[#9eb6ce] bg-[#e4ecf7] text-center align-bottom font-normal text-[#27413e]";
const cell = "border-b border-r border-black px-0 pb-0 pt-1";

function RowHead({ n, hot }: { n: number; hot?: boolean }) {
  return (
    <th scope="row" className={`text-[14px] leading-4 ${hot ? "border-b border-r border-[#e8a030] bg-[#ffcf86] text-center align-bottom font-normal text-[#27413e]" : rowHead}`}>
      {n}
    </th>
  );
}

function Sheet() {
  return (
    <div className={`min-w-0 flex-1 overflow-hidden bg-white ${MONO} text-black`}>
      <div className="relative">
        <table className="w-[802px] table-fixed border-separate border-spacing-0 whitespace-nowrap">
          <colgroup>
            <col className="w-[34px]" />
            <col className="w-[111px]" />
            <col className="w-[44px]" />
            <col className="w-[111px]" />
            <col className="w-[61px]" />
            <col className="w-[81px]" />
            <col className="w-[72px]" />
            <col className="w-[49px]" />
            <col className="w-[89px]" />
            <col className="w-[150px]" />
          </colgroup>
          <thead>
            <tr className="h-[19px] text-[16px] leading-[14px] text-[#27413e]">
              <th className="border-b border-r border-[#9eb6ce] bg-[#a9c4e9] p-0">
                <svg className="ml-auto mr-1 h-[10px] w-[10px]" viewBox="0 0 10 10" aria-label="全选">
                  <path d="M10 0v10H0z" fill="#e4ecf7" />
                </svg>
              </th>
              {["A", "B", "C", "D", "E", "F", "G", "H", ""].map((c, i) => (
                <th key={i} className="border-b border-r border-[#9eb6ce] bg-gradient-to-b from-[#f7fafd] to-[#d4deec] p-0 pt-[4px] font-normal">
                  {c}
                </th>
              ))}
            </tr>
          </thead>
          <tbody className="text-[15px] font-bold">
            <tr className="h-[30px]">
              <RowHead n={1} />
              <td colSpan={9} className="border-b border-r border-black p-0">
                <div className="flex h-[29px] items-center gap-[109px] pl-[386px] pt-2">
                  <span className="text-[24px] leading-[21px]">预审指示</span>
                  <span className="text-[15px] leading-[21px]">(QR) WI-OM-09-01</span>
                </div>
              </td>
            </tr>
            <tr className="h-[30px] text-center">
              <RowHead n={2} />
              <td className={`${cell} text-[17px] leading-5`}>产品编号</td>
              <td colSpan={3} className={cell}>8S7AD06JA0</td>
              <td className={`${cell} text-[17px] leading-5`}>预审日期</td>
              <td colSpan={2} className={cell}>2019/1/29</td>
              <td className={`${cell} text-[17px] leading-5`}>预审人</td>
              <td className="border-b border-r border-black p-0 pl-[19px] pt-1 text-left leading-5">
                <span className="text-[17px]">肖又文（</span>020)
              </td>
            </tr>
            <tr className="h-[30px] text-center">
              <RowHead n={3} />
              <td rowSpan={4} className="border-b border-r border-black p-0 pl-1 pt-1 text-left text-[16px] leading-[18px]">
                待确认光绘时
                <br />
                一起确认问题
              </td>
              <td className={`${cell} text-[17px] leading-5`}>序号</td>
              <td colSpan={6} className="border-b border-r border-black p-0 pr-[3px] pt-1 text-[17px] leading-5">
                待与客户确认问题(原因与内容)
              </td>
              <td className="border-b border-r border-black p-0 pl-20 pt-1 text-left text-[17px] leading-5">预审结论</td>
            </tr>
            {[1, 2, 3].map((n) => (
              <tr key={n} className="h-[30px] text-center">
                <RowHead n={n + 3} />
                <td className={cell}>{n}</td>
                <td colSpan={6} className={cell} />
                <td className={cell} />
              </tr>
            ))}
            <tr className="h-[59px]">
              <RowHead n={7} />
              <td className="border-b border-r border-black p-0 pl-1 pt-1 text-[16px] leading-[18px]">
                重传文件
                <br />
                内容说明
              </td>
              <td colSpan={8} className={cell} />
            </tr>
            {[
              { n: 1, text: "完成铜厚35um" },
              { n: 2, text: "孔盘等大打在铜上按金属孔制作" },
              { n: 3, text: "孔壁到孔壁间距不足可以移小孔保证满足孔壁间距，点亮的钻孔移孔后按塞孔制作" },
              { n: 4, text: "断线头按文件制作" },
              { n: 5, text: "" },
            ].map(({ n, text }) => (
              <tr key={n} className={n === 3 ? "h-[40px]" : "h-[30px]"}>
                <RowHead n={n + 7} hot={n === 2} />
                {n === 1 && (
                  <td rowSpan={5} className="border-b border-r border-black p-0 pl-[3px]">
                    <div className={`mb-1 text-[15px] leading-5 ${CJK}`}>
                      顾客要求与文
                      <br />
                      件设计不一致
                      <br />
                      需要CAM更改
                      <br />
                      的信息指示<span className="font-normal text-[#0a0acc]">(这</span>
                    </div>
                    <div className="text-[16px] font-normal leading-[18px] text-[#0a0acc]">
                      部分信息客诉
                      <br />
                      的风险最高)
                    </div>
                  </td>
                )}
                <td className={`${cell} text-center`}>{n}</td>
                <td colSpan={7} className="border-b border-r border-black p-0 pl-[3px] pt-px text-[14px] leading-4">
                  {text}
                </td>
              </tr>
            ))}
            {[6, 7, 8, 9, 10, 11, 12].map((n) => (
              <tr key={n} className="h-[30px]">
                <RowHead n={n + 7} />
                {n === 6 && (
                  <td rowSpan={7} className="border-b border-r border-black p-0 pt-1 text-center text-[16px] leading-[18px]">
                    需CAM特殊注
                    <br />
                    意或者补充说
                    <br />
                    明的制作要求
                  </td>
                )}
                <td className={`${cell} text-center`}>{n}</td>
                <td colSpan={7} className={cell} />
              </tr>
            ))}
          </tbody>
        </table>
        <div className="absolute left-[174px] top-[289px] h-[34px] w-[250px] border-2 border-[#d61fd6] shadow-[3px_3px_4px_rgba(0,0,0,0.45),inset_3px_3px_4px_rgba(0,0,0,0.3)]" />
      </div>
    </div>
  );
}

function VScroll() {
  return (
    <div className="flex w-4 shrink-0 flex-col items-center bg-[#7d9cca]">
      <div className="h-[7px] w-[14px] border border-[#7a98c0] bg-white" />
      <svg className="my-[7px] h-[5px] w-[9px]" viewBox="0 0 9 5">
        <path d="M4.500 0L9 5H0z" fill="#4a6aa0" />
      </svg>
      <div className="flex h-[183px] w-[14px] items-center justify-center rounded-[2px] border border-[#6a88b8] bg-gradient-to-r from-[#f2f6fc] to-[#c4d4ea]">
        <svg className="h-[8px] w-2" viewBox="0 0 8 8" stroke="#5a7098">
          <path d="M0 .5h8M0 2.500h8M0 4.500h8M0 6.500h8" />
        </svg>
      </div>
      <svg className="mb-[6px] mt-auto h-[5px] w-[9px]" viewBox="0 0 9 5">
        <path d="M4.500 5L9 0H0z" fill="#35548c" />
      </svg>
    </div>
  );
}

function SheetTabs() {
  const slant = "h-full -skew-x-[35deg] border-r border-[#6a8abc] bg-gradient-to-b from-[#dce8f8] to-[#c0d6f2]";
  return (
    <div className="flex h-[17px] shrink-0 overflow-hidden border-t border-[#6c8cbc] bg-[#8dabd6] text-[14px] leading-4 text-[#15428b]">
      <div className="flex w-[63px] items-center justify-around bg-[#cfe0f5] px-1">
        {["M1 0v8M8 0L3 4l5 4z", "M7 0L2 4l5 4z", "M2 0l5 4-5 4z", "M8 0v8M1 0l5 4-5 4z"].map((d) => (
          <button key={d} className="flex">
            <svg className="h-[7px] w-2" viewBox="0 0 9 8" fill="#15428b" stroke="#15428b" strokeWidth="1">
              <path d={d} />
            </svg>
          </button>
        ))}
      </div>
      <button className="w-[44px] bg-white pl-1 text-[14px]">指示</button>
      {[1, 2, 3, 4, 5, 6].map((n) => (
        <button key={n} className={`w-[37px] text-[13px] ${slant}`}>
          <span className="block skew-x-[35deg] pl-1">图{n}</span>
        </button>
      ))}
      <button className={`w-[38px] ${slant}`} aria-label="插入工作表">
        <svg className="mx-auto h-[14px] w-4 skew-x-[35deg]" viewBox="0 0 16 14">
          <path d="M5 3h9v8l-3 2H5z" fill="#fff" stroke="#6c7c98" />
          <path d="M4 0v7M.5 3.500h7M1.500 1l5 5M6.500 1l-5 5" stroke="#e08818" />
        </svg>
      </button>
      <div className="ml-auto flex w-[322px] items-center bg-[#7d9cca]">
        <span className="h-full w-[6px] border border-[#7a98c0] bg-white" />
        <svg className="ml-[8px] h-[9px] w-[5px]" viewBox="0 0 5 9">
          <path d="M0 4.500L5 0v9z" fill="#35548c" />
        </svg>
        <div className="ml-[7px] flex h-[14px] w-[166px] items-center justify-center rounded-[2px] border border-[#6a88b8] bg-gradient-to-b from-[#f2f6fc] to-[#c4d4ea]">
          <svg className="h-2 w-2" viewBox="0 0 8 8" stroke="#5a7098">
            <path d="M.5 0v8M2.500 0v8M4.500 0v8M6.500 0v8" />
          </svg>
        </div>
        <svg className="ml-auto h-[9px] w-[5px]" viewBox="0 0 5 9">
          <path d="M5 4.500L0 0v9z" fill="#35548c" />
        </svg>
        <span className="ml-2 mr-4 h-full w-[6px] border border-[#7a98c0] bg-white" />
      </div>
    </div>
  );
}

function StatusBar() {
  return (
    <div className="flex h-[21px] shrink-0 items-center border-t border-[#5a80b8] bg-gradient-to-b from-[#dceafc] via-[#c0d8f8] to-[#cfe2fc] text-[12px] text-[#15428b]">
      <span className="flex h-full w-[41px] items-center border-r border-[#90b0dc] pl-[7px]">就绪</span>
      <div className="ml-auto flex h-full items-center border-l border-[#90b0dc] bg-gradient-to-b from-[#b8d2f4] to-[#8fb4e4] pl-[6px] pr-[2px]">
        <div className="flex h-[18px] border border-[#b8cce8]">
          <button aria-label="普通" className="flex w-[19px] items-center justify-center bg-[#fccb7c]">
            <svg className="h-[11px] w-[13px]" viewBox="0 0 13 11" fill="#fff" stroke="#555">
              <path d="M.5.5h12v10H.5zM.5 4h12M.5 7h12M4.500.5v10M8.500.5v10" />
            </svg>
          </button>
          <button aria-label="页面布局视图" className="flex w-[18px] items-center justify-center bg-[#dfe8f4]">
            <svg className="h-[11px] w-[13px]" viewBox="0 0 13 11" fill="#fff" stroke="#555">
              <path d="M.5.5h12v10H.5zM4 2.500h5v6H4zM5 4.500h3M5 6.500h3" />
            </svg>
          </button>
          <button aria-label="分页预览" className="flex w-[18px] items-center justify-center bg-[#dfe8f4]">
            <svg className="h-[11px] w-[13px]" viewBox="0 0 13 11" fill="#fff" stroke="#555">
              <path d="M.5.5h12v10H.5zM4.500.5v6h4v-6" />
            </svg>
          </button>
        </div>
        <span className="ml-[9px] w-[41px]">100%</span>
        <button aria-label="缩小" className="flex h-4 w-4 items-center justify-center rounded-full border border-[#5a74a0] bg-[#e8eef8]">
          <svg className="h-2 w-2" viewBox="0 0 8 8" stroke="#333" strokeWidth="2">
            <path d="M1 4h6" />
          </svg>
        </button>
        <input
          type="range"
          aria-label="显示比例"
          className="mx-px h-4 w-[101px] appearance-none bg-[linear-gradient(#4a6ca0,#4a6ca0)] bg-[length:100%_1px] bg-center bg-no-repeat [&::-webkit-slider-thumb]:h-[13px] [&::-webkit-slider-thumb]:w-[9px] [&::-webkit-slider-thumb]:appearance-none [&::-webkit-slider-thumb]:rounded-b-full [&::-webkit-slider-thumb]:border [&::-webkit-slider-thumb]:border-[#4a6ca0] [&::-webkit-slider-thumb]:bg-[#e8eef8]"
        />
        <button aria-label="放大" className="flex h-4 w-4 items-center justify-center rounded-full border border-[#5a74a0] bg-[#e8eef8]">
          <svg className="h-2 w-2" viewBox="0 0 8 8" stroke="#333" strokeWidth="2">
            <path d="M0 4h8M4 0v8" />
          </svg>
        </button>
        <svg className="ml-[6px] mt-2 h-[11px] w-[11px]" viewBox="0 0 11 11" fill="#4a6ca8">
          <path d="M8 0h2v2H8zM4 4h2v2H4zM8 4h2v2H8zM0 8h2v2H0zM4 8h2v2H4zM8 8h2v2H8z" />
        </svg>
      </div>
    </div>
  );
}

function ExcelWindow() {
  return (
    <section
      className={`absolute left-[1081px] top-[47px] flex h-[862px] w-[793px] flex-col rounded-lg border border-[#c0c4c8] bg-[linear-gradient(90deg,#5c6064_0,#4a4e52_140px,#0d1216_160px,#0a0e12_640px,#2c3236_690px,#4f6668_790px)] shadow-[0_0_8px_#000] ${UI}`}
    >
      <ExcelTitle />
      <div className="flex min-h-0 flex-1 rounded-b-lg bg-[linear-gradient(180deg,#90979c_0,#5c6064_100px,#90979c_200px,#0a0e12_206px,#0a0e12_100%)] pb-[5px] pl-1 pr-[6px]">
        <div className="flex min-w-0 flex-1 flex-col border-x border-[#3a5068] bg-[#c4dcf8]">
          <RibbonTabs />
          <Ribbon />
          <SecurityBar />
          <FormulaBar />
          <div className="mt-1 flex min-h-0 flex-1">
            <Sheet />
            <VScroll />
          </div>
          <SheetTabs />
          <StatusBar />
        </div>
      </div>
    </section>
  );
}

/* ---------- Taskbar ---------- */

function TaskButton({ label, icon, width = "w-[98px]", active }: { label: string; icon: React.ReactNode; width?: string; active?: boolean }) {
  return (
    <button
      className={`flex h-[27px] shrink-0 items-center gap-[5px] overflow-hidden whitespace-nowrap rounded-t-[2px] border border-b-0 border-[#6a6c6e] pl-2 text-[12px] text-white ${width} ${
        active
          ? "bg-gradient-to-b from-[#a8aaac] to-[#6c6e70]"
          : "bg-[linear-gradient(170deg,#66686a_0,#3a3c3e_45%,#1c1e20_55%,#242628_100%)]"
      }`}
    >
      {icon}
      {label}
    </button>
  );
}

const Ico = ({ children }: { children: React.ReactNode }) => (
  <svg className="h-4 w-4 shrink-0" viewBox="0 0 16 16" fill="none">
    {children}
  </svg>
);

const ExcelIco = () => (
  <Ico>
    <path d="M5 2h10v13H5z" fill="#e8f4fa" stroke="#8cb0c0" />
    <path d="M7 5h7M7 8h7M7 11h7" stroke="#68a0b8" />
    <path d="M0 1h9v9H0z" fill="#3a9a48" />
    <path d="M2 3l5 5M7 3L2 8" stroke="#fff" strokeWidth="1.500" />
  </Ico>
);

function Taskbar() {
  return (
    <footer className={`flex h-[29px] shrink-0 items-end overflow-visible bg-[linear-gradient(180deg,#6a7880_0,#0b0f12_2px,#05080a_100%)] ${UI}`}>
      <button aria-label="开始菜单" className="z-10 ml-2 h-[32px] w-9 rounded-t-full bg-[radial-gradient(circle_at_50%_80%,#5ad0f0_0,#2c6ea8_45%,#1c3c66_80%,#88a8c0_100%)]">
        <svg className="mx-auto h-[22px] w-[22px]" viewBox="0 0 22 22">
          <path d="M3 4c3-2 5-2 7-1L9 10C7 9 4 9 2 10z" fill="#f06428" />
          <path d="M12 4c2 1 5 1 8-1l-2 7c-2 2-5 2-7 1z" fill="#88c83c" />
          <path d="M2 12c2-2 5-2 7 0l-2 7c-2-1-4-1-6 0z" fill="#3c9cf0" />
          <path d="M11 13c2 1 5 1 7-1l-2 7c-2 2-5 2-7 0z" fill="#ffc820" />
        </svg>
      </button>
      <div className="flex h-[27px] w-[97px] items-center justify-around pl-[10px] pr-1">
        <svg className="h-[18px] w-[18px]" viewBox="0 0 18 18" fill="none">
          <path d="M14 13c-2 4-10 3-10-4s9-7 10 0H5" stroke="#3cb0f0" strokeWidth="3" />
          <path d="M1 16C0 10 10 2 16 2c2 0 1 3 0 4" stroke="#f0c030" strokeWidth="1.500" />
        </svg>
        <svg className="h-[18px] w-[18px]" viewBox="0 0 18 18">
          <path d="M1 3h6l1 2h8v10H1z" fill="#e8cc78" />
          <path d="M2 7h14v9H2z" fill="#f8eab0" />
          <path d="M4 11h10v5H11v-2H7v2H4z" fill="#5aa0d8" />
        </svg>
      </div>
      <div className="flex gap-1">
        <TaskButton
          label="Foxmail"
          icon={
            <Ico>
              <path d="M12 2C5 3 2 7 3 11c1 4 8 4 9 0 1-3-3-4-4-2" stroke="#e83828" strokeWidth="3" />
            </Ico>
          }
        />
        <TaskButton
          label="[2] Admi..."
          icon={
            <Ico>
              <path d="M1 1h13l1 1v13H1z" fill="#2c50c8" />
              <path d="M4 1h8v5H4z" fill="#e0e4f0" />
              <path d="M3 8h10v7H3z" fill="#fff" />
              <path d="M4 10h8M4 12h8" stroke="#c03030" />
            </Ico>
          }
        />
      </div>
      <div className="flex h-[27px] w-[205px] items-center justify-between px-[15px]">
        <Ico>
          <path d="M3 0h10v16H3z" fill="#8cc8e8" />
          <path d="M4 2h8v3H4z" fill="#e8f8ff" />
          <path d="M4.500 7v8M7 7v8M9.500 7v8M12 7v8" stroke="#fff" strokeDasharray="1.500 1" strokeWidth="1.500" />
        </Ico>
        <Ico>
          <path d="M1 1h14v14H1z" fill="#fff" />
          <path d="M4 2c4 0 5 4 5 9L3 8z" fill="#28a048" />
          <path d="M9 3c3 2 5 6 5 11H9z" fill="#e02020" />
        </Ico>
        <Ico>
          <circle cx="8" cy="8" r="7.500" fill="#f8d820" />
          <path d="M10 2c-4 2-5 5 0 7-3 0-5 3-2 6 4-1 5-3 2-5" fill="#38a838" />
        </Ico>
        <Ico>
          <rect width="16" height="16" rx="2" fill="#28b838" />
          <path d="M2 3.500h12M2 12.500h12M3 6h3v4H3zM8 6v4M10 6l2 2v2M14 6l-2 2" stroke="#fff" />
        </Ico>
        <Ico>
          <path d="M2 1h12v14H6L2 11z" fill="#1c78d0" />
          <path d="M5 3c5 0 8 4 7 12-2-4-4-6-7-7z" fill="#c8e8ff" />
        </Ico>
      </div>
      <div className="flex gap-1">
        <TaskButton
          label="兴森快捷..."
          icon={
            <Ico>
              <path d="M8 0l2.500 4.500L16 5l-3 4 1 6-6-2-6 2 1-6-3-4 5.500-.500z" fill="#f09428" />
              <path d="M8 4l-3 7M8 4l3 7M6 9h4" stroke="#b03818" />
            </Ico>
          }
        />
        <TaskButton
          label="EDS工程..."
          icon={
            <Ico>
              <path d="M3 1h11l-1 4H8v2h4l-1 3H7l-1 6H2z" fill="#fff" />
              <path d="M4 2h9l-1 2H7v4h3l-1 1H6l-1 6H2z" fill="#18a058" />
            </Ico>
          }
        />
        <TaskButton
          label="制作规范 ..."
          icon={
            <Ico>
              <path d="M2 1h12v14H2z" fill="#e8f8ff" />
              <path d="M3 3h10M3 6h10M3 9h10M3 12h10" stroke="#2890d8" strokeWidth="2" />
            </Ico>
          }
        />
        <TaskButton
          label="Genesis"
          icon={
            <Ico>
              <circle cx="9" cy="9" r="5" fill="#e8d840" stroke="#20a8a0" strokeWidth="3" strokeDasharray="2 1" />
              <circle cx="9" cy="9" r="2" fill="#1c60c0" />
              <path d="M1 1l4 4" stroke="#4080e0" strokeWidth="3" />
            </Ico>
          }
        />
        <div className="flex">
          {["Engineeri...", "Progress", "Graphic ...", "Job Matr...", "Drill Tool..."].map((t) => (
            <TaskButton key={t} label={t} width="w-[100px]" icon={<XIcon />} />
          ))}
        </div>
        <div className="flex">
          <TaskButton label="8S7AD06..." width="w-[99px]" icon={<ExcelIco />} />
          <TaskButton label="8S7AD06..." width="w-[99px]" icon={<ExcelIco />} active />
        </div>
      </div>
      <div className="ml-auto flex h-[27px] items-center text-[12px] text-white">
        <Ico>
          <path d="M1 6h14v8H1z" fill="#ddd" />
          <path d="M2 8h12M2 10h12M4 12h8" stroke="#444" strokeDasharray="1.500 1" />
          <path d="M8 6V3h5V1" stroke="#ddd" />
        </Ico>
        <span className="ml-[7px] flex h-[14px] w-[14px] items-center justify-center rounded-full border border-white bg-[#2038b8] text-[10px] font-bold">?</span>
        <svg className="ml-3 h-5 w-[9px]" viewBox="0 0 9 20" fill="none" stroke="#fff">
          <path d="M3 .5h5v4H3zM.5 3h5v4h-5z" />
          <path d="M2 15h5l-2.500 3z" fill="#fff" />
        </svg>
        <svg className="ml-[15px] h-[5px] w-2" viewBox="0 0 8 5" fill="#fff">
          <path d="M4 0l4 5H0z" />
        </svg>
        <svg className="ml-3 h-4 w-4" viewBox="0 0 16 16">
          <circle cx="8" cy="8" r="8" fill="#38a0e8" />
          <path d="M3 3l9 4-2 2 1 1-4 4 1-4-3-1z" fill="#fff" />
        </svg>
        <svg className="ml-2 h-4 w-4" viewBox="0 0 16 16">
          <path d="M2 1v14" stroke="#fff" strokeWidth="1.500" />
          <path d="M3 2h9v7H3z" fill="#fff" />
          <circle cx="11" cy="11" r="4.500" fill="#d02020" />
          <path d="M9 9l4 4M13 9l-4 4" stroke="#fff" strokeWidth="1.500" />
        </svg>
        <svg className="ml-2 h-4 w-4" viewBox="0 0 16 16" fill="none" stroke="#fff" strokeWidth="1.500">
          <path d="M4 5h11v7H4zM7 15h6M2 1v4M4 1v4M1 5h4v3H3v6h5" />
        </svg>
        <svg className="ml-2 h-4 w-4" viewBox="0 0 16 16" fill="none" stroke="#fff">
          <path d="M1 6h3l4-4v12L4 10H1z" fill="#fff" />
          <path d="M10 5c1.500 2 1.500 4 0 6M12 3c3 3 3 7 0 10" />
        </svg>
        <time className="ml-6 mr-4">3:33</time>
        <button aria-label="显示桌面" className="h-[27px] w-[14px] border-l border-[#555] bg-gradient-to-r from-[#333] to-[#0c0e10]" />
      </div>
    </footer>
  );
}

export default function App() {
  return (
    <div className="relative flex min-h-screen w-full flex-col overflow-hidden bg-black text-black">
      <div className="flex min-h-0 flex-1">
        <div className="w-2 shrink-0 border-r border-[#1c3c3c] bg-[linear-gradient(180deg,#5a9c9c_0,#8cc4c4_8%,#4c8888_12%,#5c9c9c_60%,#a8dcec_95%,#9cd8f4_100%)]" />
        <main className="flex min-w-0 flex-1 flex-col">
          <MenuBar />
          <div className="flex min-h-0 flex-1">
            <LayerPanel />
            <BoardCanvas />
            <ToolPalette />
          </div>
          <CommandBar />
          <div className="shrink-0 border-b-[7px] border-t-2 border-b-[#9cdcf4] border-t-[#6c7c80] bg-[#b8f4f4] pb-[3px] pl-[2px]">
            <output
              className={`flex h-[26px] items-center justify-center border-2 border-r-0 border-b-[#5a9c9c] border-l-[#e0ffff] border-t-[#e0ffff] bg-[#b3ffff] text-[12px] font-bold shadow-[0_0_0_1px_#000] ${MONO}`}
            >
              17 r20 Lines were selected
            </output>
          </div>
        </main>
      </div>
      <Taskbar />
      <Popview />
      <ExcelWindow />
    </div>
  );
}
